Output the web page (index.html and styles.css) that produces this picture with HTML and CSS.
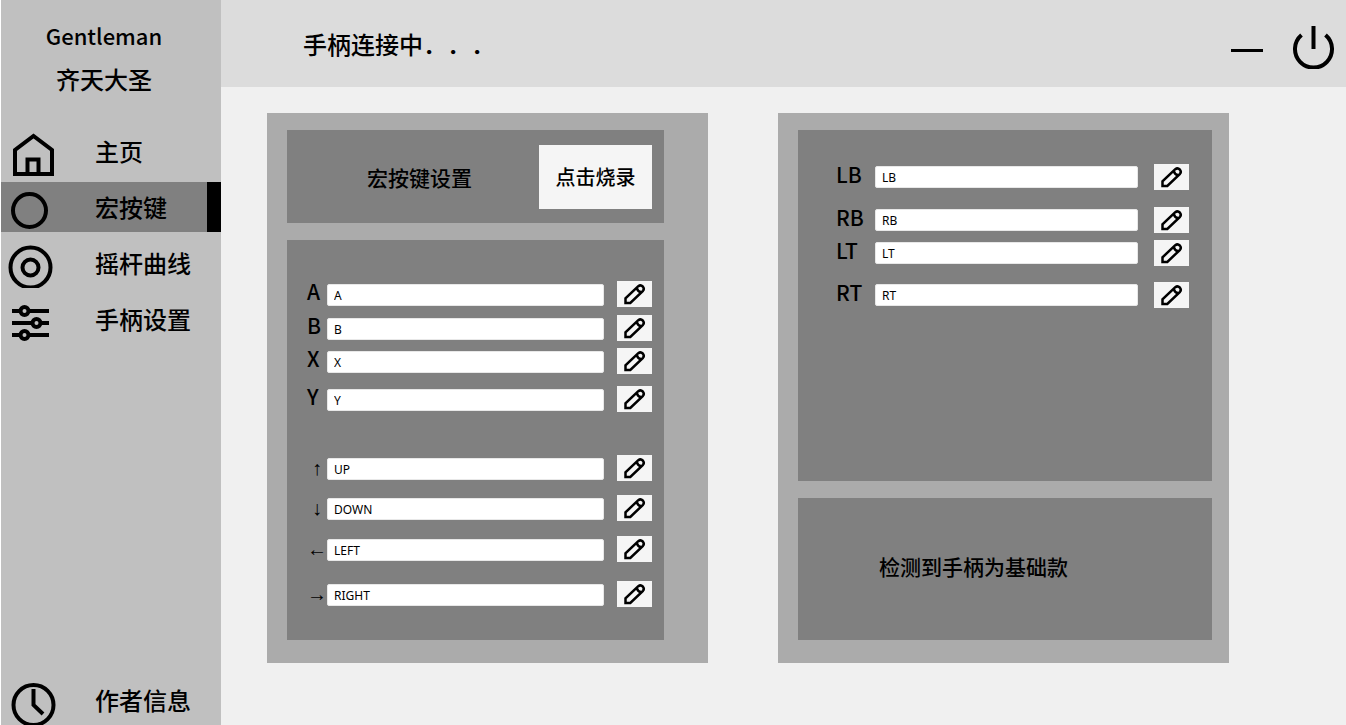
FILE: index.html
```
<!DOCTYPE html>
<html lang="zh-CN">
<head>
    <meta charset="UTF-8">
    <meta name="viewport" content="width=device-width, initial-scale=1.0">
    <title>Gentleman 齐天大圣</title>
    <link rel="stylesheet" href="styles.css">
</head>
<body>
    <!-- Pencil icon shared by all edit buttons -->
    <svg class="sprite" aria-hidden="true">
        <symbol id="pencil" viewBox="0 0 35 26">
            <path d="M8.500 22V17.300L21.300 5.200Q23.600 3.400 25.800 5.500Q27.700 7.700 26 9.800L13.300 22Z M19.800 7Q20.500 10.700 24.300 11.300"/>
        </symbol>
    </svg>

    <aside class="sidebar">
        <div class="brand">
            <div class="brand-name">Gentleman</div>
            <div>齐天大圣</div>
        </div>

        <nav class="menu">
            <a class="menu-item" href="#home">
                <svg class="menu-icon" viewBox="0 0 60 50"><path d="M14 48V24L32.500 10L51 24V48Z M26.500 48V33.500H37.500V48"/></svg>
                <span>主页</span>
            </a>
            <a class="menu-item active" href="#macro">
                <svg class="menu-icon" viewBox="0 0 60 50"><circle cx="28.500" cy="28.500" r="16.500"/></svg>
                <span>宏按键</span>
            </a>
            <a class="menu-item" href="#curve">
                <svg class="menu-icon" viewBox="0 0 60 50"><circle cx="29.500" cy="29.500" r="20"/><circle cx="29.500" cy="29.500" r="8"/></svg>
                <span>摇杆曲线</span>
            </a>
            <a class="menu-item" href="#settings">
                <svg class="menu-icon" viewBox="0 0 60 50"><path d="M11 17H19M28 17H48M11 29H31M40 29H48M11 41H19M28 41H48"/><circle cx="23.500" cy="17" r="4"/><circle cx="35.500" cy="29" r="4"/><circle cx="23.500" cy="41" r="4"/></svg>
                <span>手柄设置</span>
            </a>
            <a class="menu-item author" href="#author">
                <svg class="menu-icon" viewBox="0 0 60 50"><circle cx="32.500" cy="30" r="20"/><path d="M32.500 14V30L42 39"/></svg>
                <span>作者信息</span>
            </a>
        </nav>
    </aside>

    <div class="page">
        <header class="topbar">
            <h1>手柄连接中．．．</h1>
            <div class="window-buttons">
                <button type="button" aria-label="最小化">
                    <svg width="34" height="46" viewBox="0 0 34 46"><path d="M1 27.500H33"/></svg>
                </button>
                <button type="button" aria-label="关闭">
                    <svg width="46" height="46" viewBox="0 0 46 46"><path class="thick" d="M11.500 12A18.500 18.500 0 1 0 35.500 12M23.500 3V26"/></svg>
                </button>
            </div>
        </header>

        <main class="content">
            <section class="card card-left">
                <div class="panel panel-head">
                    <h2>宏按键设置</h2>
                    <button type="button" class="burn-btn">点击烧录</button>
                </div>
                <form class="panel keys keys-left">
                    <div class="key-row">
                        <label for="key-a">A</label>
                        <input type="text" id="key-a" value="A">
                        <button type="button" class="edit-btn" aria-label="编辑 A"><svg><use href="#pencil"/></svg></button>
                    </div>
                    <div class="key-row">
                        <label for="key-b">B</label>
                        <input type="text" id="key-b" value="B">
                        <button type="button" class="edit-btn" aria-label="编辑 B"><svg><use href="#pencil"/></svg></button>
                    </div>
                    <div class="key-row">
                        <label for="key-x">X</label>
                        <input type="text" id="key-x" value="X">
                        <button type="button" class="edit-btn" aria-label="编辑 X"><svg><use href="#pencil"/></svg></button>
                    </div>
                    <div class="key-row">
                        <label for="key-y">Y</label>
                        <input type="text" id="key-y" value="Y">
                        <button type="button" class="edit-btn" aria-label="编辑 Y"><svg><use href="#pencil"/></svg></button>
                    </div>
                    <div class="key-row">
                        <label class="arrow" for="key-up">↑</label>
                        <input type="text" id="key-up" value="UP">
                        <button type="button" class="edit-btn" aria-label="编辑 UP"><svg><use href="#pencil"/></svg></button>
                    </div>
                    <div class="key-row">
                        <label class="arrow" for="key-down">↓</label>
                        <input type="text" id="key-down" value="DOWN">
                        <button type="button" class="edit-btn" aria-label="编辑 DOWN"><svg><use href="#pencil"/></svg></button>
                    </div>
                    <div class="key-row">
                        <label class="arrow" for="key-left">←</label>
                        <input type="text" id="key-left" value="LEFT">
                        <button type="button" class="edit-btn" aria-label="编辑 LEFT"><svg><use href="#pencil"/></svg></button>
                    </div>
                    <div class="key-row">
                        <label class="arrow" for="key-right">→</label>
                        <input type="text" id="key-right" value="RIGHT">
                        <button type="button" class="edit-btn" aria-label="编辑 RIGHT"><svg><use href="#pencil"/></svg></button>
                    </div>
                </form>
            </section>

            <section class="card card-right">
                <form class="panel keys keys-right">
                    <div class="key-row">
                        <label for="key-lb">LB</label>
                        <input type="text" id="key-lb" value="LB">
                        <button type="button" class="edit-btn" aria-label="编辑 LB"><svg><use href="#pencil"/></svg></button>
                    </div>
                    <div class="key-row">
                        <label for="key-rb">RB</label>
                        <input type="text" id="key-rb" value="RB">
                        <button type="button" class="edit-btn" aria-label="编辑 RB"><svg><use href="#pencil"/></svg></button>
                    </div>
                    <div class="key-row">
                        <label for="key-lt">LT</label>
                        <input type="text" id="key-lt" value="LT">
                        <button type="button" class="edit-btn" aria-label="编辑 LT"><svg><use href="#pencil"/></svg></button>
                    </div>
                    <div class="key-row">
                        <label for="key-rt">RT</label>
                        <input type="text" id="key-rt" value="RT">
                        <button type="button" class="edit-btn" aria-label="编辑 RT"><svg><use href="#pencil"/></svg></button>
                    </div>
                </form>
                <div class="panel status">
                    <p>检测到手柄为基础款</p>
                </div>
            </section>
        </main>
    </div>
</body>
</html>
```
FILE: styles.css
```
:root {
    --sidebar-color: #c0c0c0;
    --topbar-color: #dcdcdc;
    --page-color: #f0f0f0;
    --card-color: #ababab;
    --panel-color: #808080;
    --button-color: #f5f5f5;
}

* {
    margin: 0;
    padding: 0;
    box-sizing: border-box;
}

body {
    font-family: "Noto Sans CJK SC", sans-serif;
    font-weight: 500;
    color: #000;
    background: var(--page-color);
    display: flex;
    height: 100vh;
}

button {
    font: inherit;
    color: inherit;
    border: none;
    cursor: pointer;
}

svg {
    display: block;
    fill: none;
    stroke: #000;
    stroke-width: 3;
}

.sprite {
    display: none;
}

/* Sidebar */
.sidebar {
    flex: 0 0 221px;
    display: flex;
    flex-direction: column;
    background: var(--sidebar-color);
    border-left: 1px solid #fff;
    overflow: hidden;
}

.brand {
    padding: 13px 14px 25px 0;
    text-align: center;
    font-size: 24px;
    line-height: 44px;
}

.brand-name {
    font-size: 22px;
}

.menu {
    flex: 1;
    display: flex;
    flex-direction: column;
    gap: 6px;
}

.menu-item {
    flex: none;
    display: flex;
    align-items: center;
    gap: 34px;
    height: 50px;
    font-size: 24px;
    line-height: 50px;
    color: inherit;
    text-decoration: none;
}

.menu-item.active {
    background: var(--panel-color);
    border-right: 14px solid #000;
}

.menu-item.author {
    margin-top: auto;
}

.menu-icon {
    flex: none;
    width: 60px;
    height: 50px;
    stroke-width: 4;
}

/* Top bar */
.page {
    flex: 1;
    min-width: 0;
}

.topbar {
    display: flex;
    justify-content: space-between;
    align-items: center;
    height: 87px;
    padding: 4px 10px 0 82px;
    background: var(--topbar-color);
}

h1 {
    padding-bottom: 4px;
    font-size: 24px;
    font-weight: 500;
    font-kerning: none;
    text-spacing-trim: space-all;
}

.window-buttons {
    display: flex;
    gap: 26px;
}

.window-buttons button {
    background: none;
}

.thick {
    stroke-width: 4;
}

/* Cards */
.content {
    display: grid;
    grid-template-columns: minmax(0, 441fr) minmax(0, 451fr);
    gap: 70px;
    padding: 26px 117px 26px 46px;
}

.card {
    display: grid;
    gap: 17px;
    background: var(--card-color);
}

.card-left {
    padding: 17px 44px 23px 20px;
}

.card-right {
    padding: 17px 17px 23px 20px;
    grid-template-rows: 1fr 142px;
}

.panel {
    background: var(--panel-color);
}

.panel-head {
    display: flex;
    justify-content: space-between;
    align-items: center;
    padding: 15px 12px 14px 80px;
}

h2,
.status {
    font-size: 21px;
    font-weight: 500;
}

.burn-btn {
    width: 113px;
    height: 64px;
    padding-bottom: 2px;
    font-size: 20px;
    background: var(--button-color);
}

.status {
    display: flex;
    align-items: center;
    padding: 0 0 6px 81px;
}

/* Key mapping rows */
.keys {
    display: grid;
    align-content: start;
}

.keys-left {
    grid-template-rows: 34px 33px 38px 69px 40px 41px 45px 26px;
    padding: 41px 12px 33px 20px;
}

.keys-right {
    grid-template-rows: 43px 33px 42px 26px;
    padding: 34px 23px 34px 38px;
}

.key-row {
    display: grid;
    grid-template-rows: 26px;
    align-items: center;
    height: 26px;
}

.keys-left .key-row {
    grid-template-columns: 20px 1fr 48px;
}

.keys-left input {
    margin-top: 2px;
}

.keys-right .key-row {
    grid-template-columns: 39px 1fr 51px;
}

.key-row label {
    font-size: 21px;
    line-height: 20px;
    padding-bottom: 6px;
}

.key-row .arrow {
    font-family: "Liberation Serif", serif;
    font-size: 20px;
    font-weight: 400;
    text-align: center;
    padding-bottom: 0;
}

.key-row input {
    width: 100%;
    height: 22px;
    padding: 1px 6px 0;
    border: 1px solid #e8e8e8;
    border-radius: 2px;
    background: #fff;
    font-family: "Noto Sans", sans-serif;
    font-size: 12px;
}

.edit-btn {
    justify-self: end;
    width: 35px;
    height: 26px;
    background: var(--button-color);
}

.edit-btn svg {
    width: 35px;
    height: 26px;
    stroke-width: 2.5;
}
```
